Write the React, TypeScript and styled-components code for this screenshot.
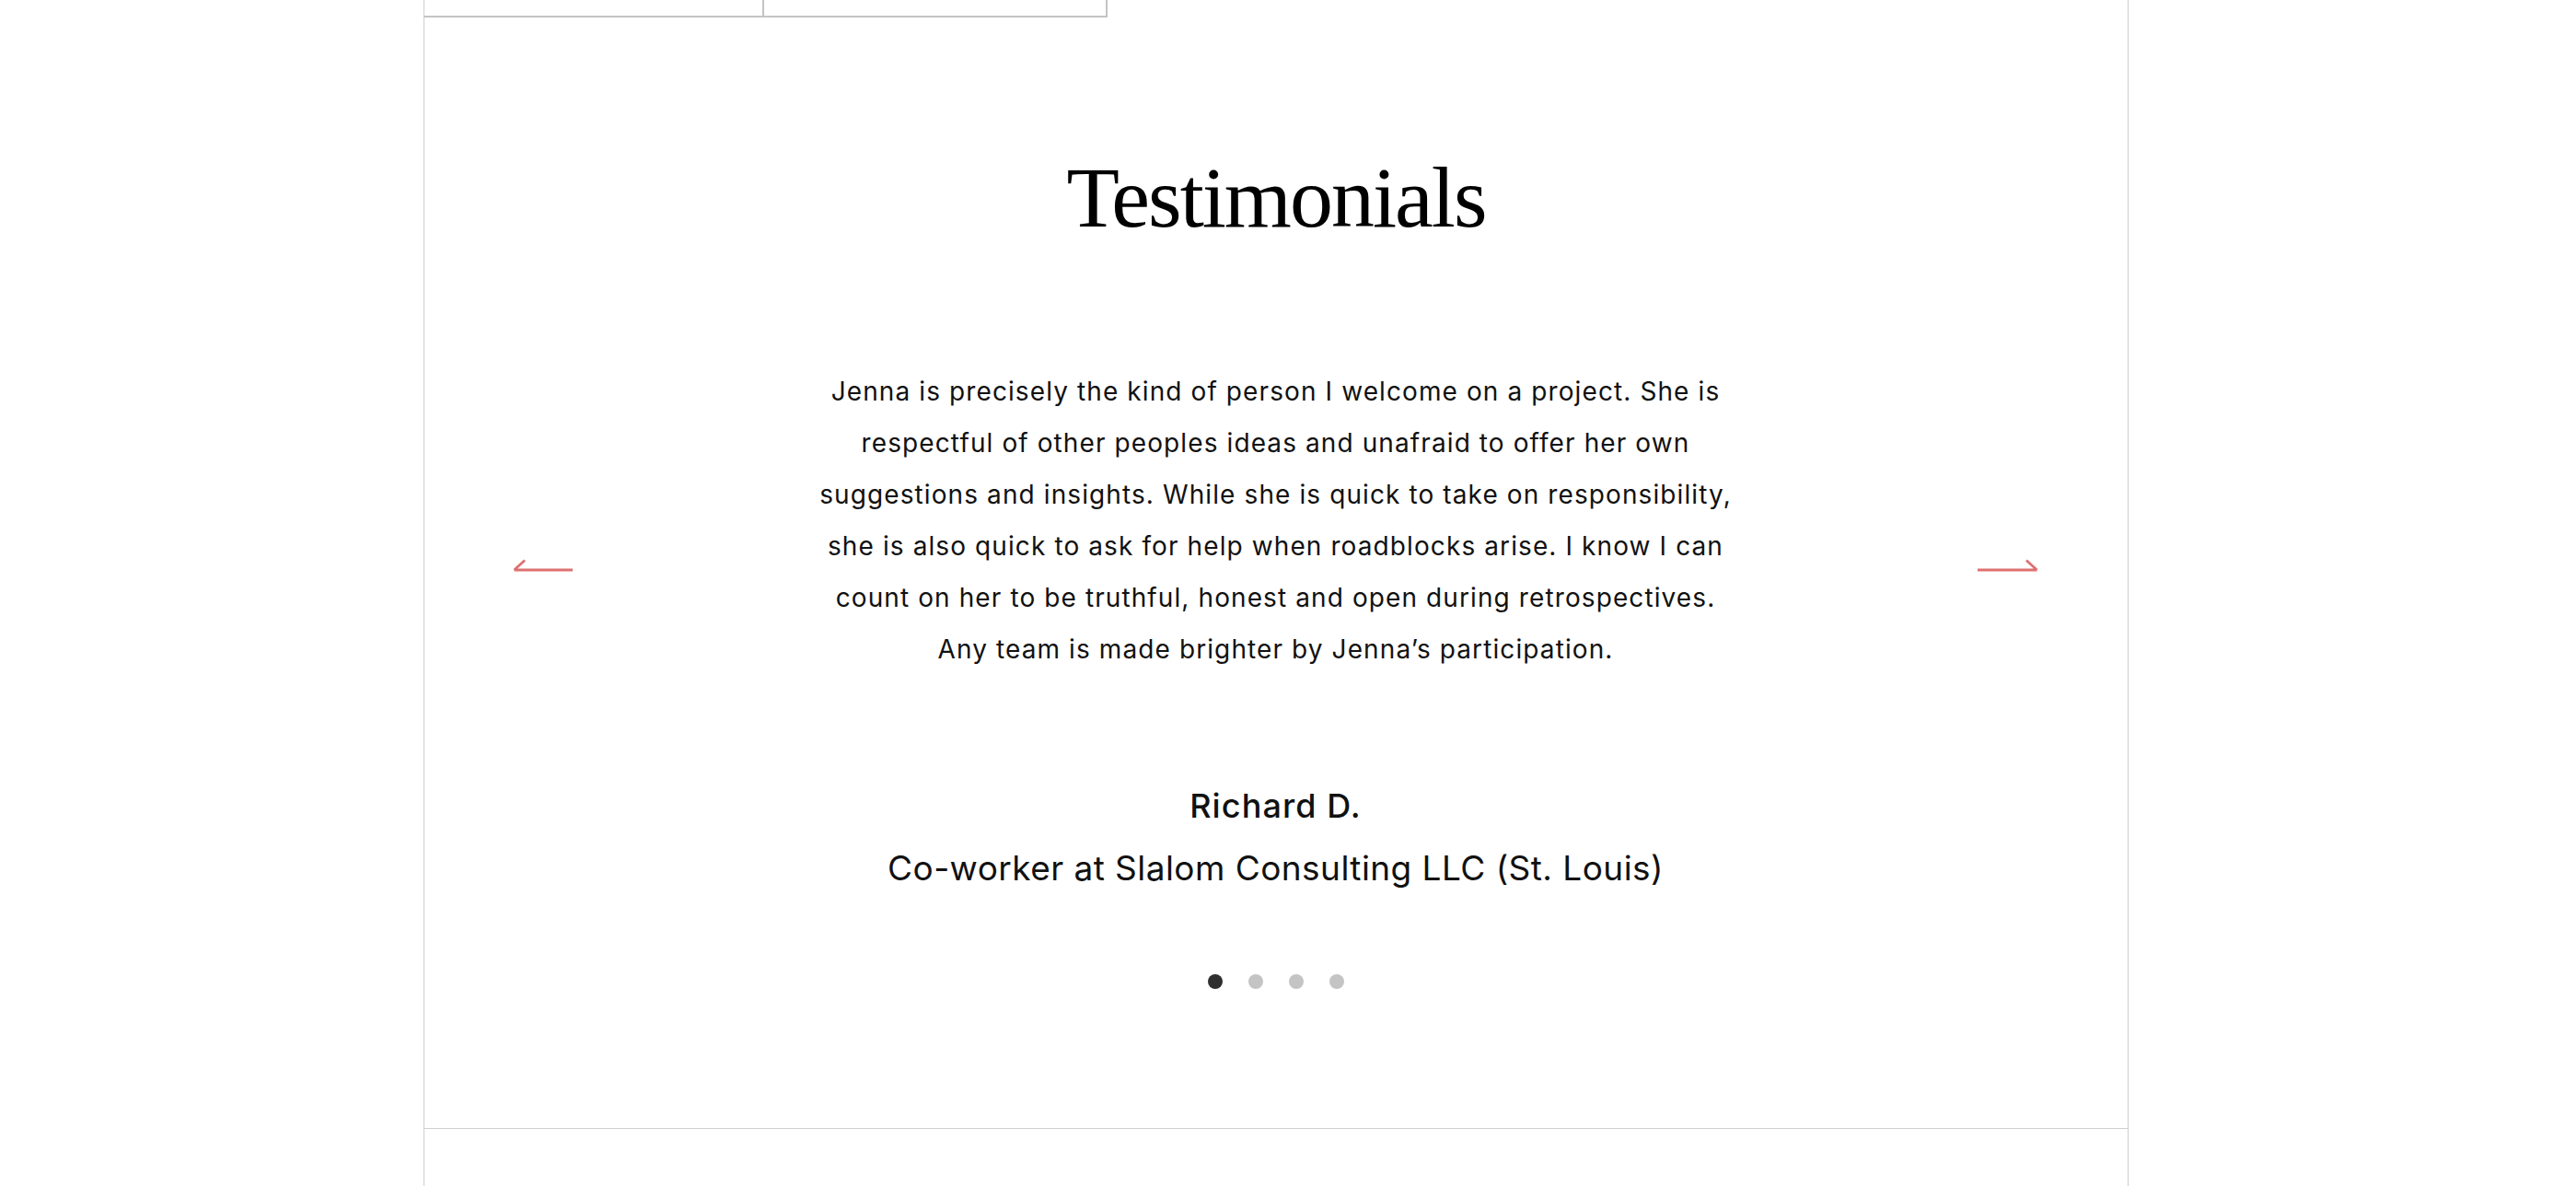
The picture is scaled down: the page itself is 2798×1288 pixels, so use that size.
import React from "react";
import styled, { createGlobalStyle } from "styled-components";

const GlobalStyle = createGlobalStyle`
  html, body {
    margin: 0;
    padding: 0;
    background: #ffffff;
    overflow: hidden;
  }
  body {
    font-family: "Inter", "Liberation Sans", sans-serif;
    color: #111111;
  }
`;

const Page = styled.div`
  box-sizing: border-box;
  margin-left: 460px;
  width: 1852px;
  min-height: 1288px;
  border-left: 1px solid #cfcfcf;
  border-right: 1px solid #cfcfcf;
  display: flex;
  flex-direction: column;
`;

const TopTable = styled.div`
  box-sizing: border-box;
  width: 742px;
  height: 19px;
  display: grid;
  grid-template-columns: 369px 1fr;
  border-bottom: 2px solid #c4c4c4;
  border-right: 2px solid #c4c4c4;
`;

const TopCell = styled.div<{ $divider?: boolean }>`
  border-right: ${(p) => (p.$divider ? "2px solid #c4c4c4" : "none")};
`;

const Section = styled.section`
  display: flex;
  flex-direction: column;
  align-items: center;
  padding-top: 148px;
  padding-bottom: 151px;
  border-bottom: 1px solid #cfcfcf;
`;

const Title = styled.h2`
  margin: 0;
  font-family: "Liberation Serif", "Times New Roman", serif;
  font-weight: 400;
  font-size: 94px;
  line-height: 94px;
  letter-spacing: -2px;
  color: #000000;
`;

const Slider = styled.div`
  box-sizing: border-box;
  width: 100%;
  margin-top: 136px;
  padding: 0 97px 0 96px;
  display: flex;
  align-items: flex-start;
  justify-content: space-between;
`;

const ArrowButton = styled.button`
  margin-top: 209px;
  padding: 0;
  border: none;
  background: none;
  width: 66px;
  height: 16px;
  cursor: pointer;
  color: #de7171;
  display: block;
  svg {
    display: block;
  }
`;

const Slide = styled.div`
  display: flex;
  flex-direction: column;
  align-items: center;
  text-align: center;
`;

const Quote = styled.p`
  margin: 0;
  font-size: 28px;
  line-height: 56px;
  font-weight: 400;
  color: #111111;
  letter-spacing: 1.1px;
`;

const Name = styled.div`
  margin-top: 121px;
  font-size: 36px;
  line-height: 1.2;
  font-weight: 500;
  letter-spacing: 1.1px;
  color: #111111;
`;

const Role = styled.div`
  margin-top: 24px;
  font-size: 37px;
  line-height: 1.2;
  font-weight: 400;
  letter-spacing: 0.45px;
  color: #111111;
`;

const Dots = styled.div`
  margin-top: 92px;
  display: flex;
  gap: 28px;
`;

const Dot = styled.span<{ $active?: boolean }>`
  width: 16px;
  height: 16px;
  border-radius: 50%;
  background: ${(p) => (p.$active ? "#2f2f2f" : "#c4c4c4")};
`;

const Rest = styled.div`
  flex: 1;
`;

const ArrowIcon = ({ dir }: { dir: "left" | "right" }) => (
  <svg width="66" height="16" viewBox="0 0 66 16" fill="none">
    {dir === "left" ? (
      <path d="M1.5 13 H65 M1.5 13 L13 2.5" stroke="currentColor" strokeWidth="2.8" />
    ) : (
      <path d="M0 13 H64.5 M64.5 13 L53 2.5" stroke="currentColor" strokeWidth="2.8" />
    )}
  </svg>
);

const quoteLines = [
  "Jenna is precisely the kind of person I welcome on a project. She is",
  "respectful of other peoples ideas and unafraid to offer her own",
  "suggestions and insights. While she is quick to take on responsibility,",
  "she is also quick to ask for help when roadblocks arise. I know I can",
  "count on her to be truthful, honest and open during retrospectives.",
  "Any team is made brighter by Jenna\u2019s participation.",
];

export default function App() {
  return (
    <>
      <GlobalStyle />
      <Page>
        <TopTable>
          <TopCell $divider />
          <TopCell />
        </TopTable>
        <Section>
          <Title>Testimonials</Title>
          <Slider>
            <ArrowButton aria-label="Previous">
              <ArrowIcon dir="left" />
            </ArrowButton>
            <Slide>
              <Quote>
                {quoteLines.map((line, i) => (
                  <React.Fragment key={i}>
                    {line}
                    {i < quoteLines.length - 1 && <br />}
                  </React.Fragment>
                ))}
              </Quote>
              <Name>Richard D.</Name>
              <Role>Co-worker at Slalom Consulting LLC (St. Louis)</Role>
              <Dots>
                <Dot $active />
                <Dot />
                <Dot />
                <Dot />
              </Dots>
            </Slide>
            <ArrowButton aria-label="Next">
              <ArrowIcon dir="right" />
            </ArrowButton>
          </Slider>
        </Section>
        <Rest />
      </Page>
    </>
  );
}
